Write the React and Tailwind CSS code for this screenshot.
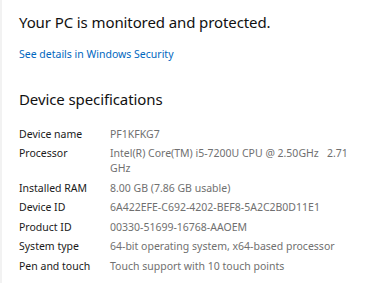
export default function App() {
  const rows = [
    ["Device name", "PF1KFKG7"],
    ["Processor", null],
    ["Installed RAM", "8.00 GB (7.86 GB usable)"],
    ["Device ID", "6A422EFE-C692-4202-BEF8-5A2C2B0D11E1"],
    ["Product ID", "00330-51699-16768-AAOEM"],
    ["System type", "64-bit operating system, x64-based processor"],
    ["Pen and touch", "Touch support with 10 touch points"],
  ];
  return (
    <div
      className="w-[375px] h-[283px] bg-white border-l-2 border-[#f2f2f2] overflow-hidden"
      style={{ fontFamily: '"Noto Sans", "Open Sans", sans-serif' }}
    >
      <div className="pl-[17px] pt-[12px]">
        <div className="text-[15px] leading-[20px] tracking-[-0.1px] text-[#111111]">
          Your PC is monitored and protected.
        </div>
        <div className="mt-[15px] text-[10.5px] leading-[15px] text-[#0067c0]">
          See details in Windows Security
        </div>
        <div className="mt-[27px] text-[15px] leading-[20px] tracking-[-0.1px] text-[#111111]">
          Device specifications
        </div>
        <div className="mt-[17.5px] flex flex-col text-[10.5px] leading-[15px]">
          {rows.map(([k, v]) => (
            <div key={k} className="flex pb-[4.5px]">
              <div className="w-[91px] shrink-0 text-[#1a1a1a]">{k}</div>
              <div className="text-[#707070] whitespace-pre">
                {v === null ? (
                  <>
                    {"Intel(R) Core(TM) i5-7200U CPU @ 2.50GHz   2.71"}
                    <br />
                    {"GHz"}
                  </>
                ) : (
                  v
                )}
              </div>
            </div>
          ))}
        </div>
      </div>
    </div>
  );
}
